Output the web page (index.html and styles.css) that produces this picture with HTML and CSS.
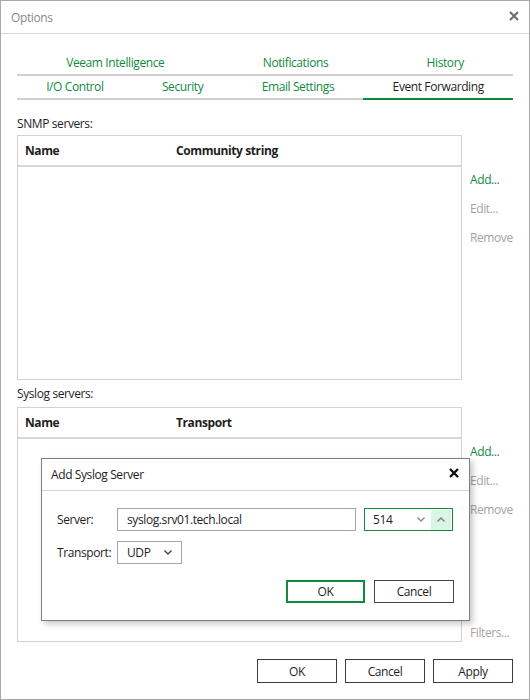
FILE: index.html
```html
<!DOCTYPE html>
<html>
<head>
    <title>Options</title>
    <link rel="stylesheet" href="styles.css">
</head>
<body>
    <div class="window">
        <div class="titlebar">
            <span class="title">Options</span>
            <svg class="close" width="10" height="10" viewBox="0 0 10 10">
                <path d="M1 1 L9 9 M9 1 L1 9" stroke="#707070" stroke-width="2.2" />
            </svg>
        </div>

        <div class="content">
            <div class="tabs">
                <div class="tab-row">
                    <span class="tab">Veeam Intelligence</span>
                    <span class="tab">Notifications</span>
                    <span class="tab">History</span>
                </div>
                <div class="tab-row">
                    <span class="tab">I/O Control</span>
                    <span class="tab">Security</span>
                    <span class="tab">Email Settings</span>
                    <span class="tab active">Event Forwarding</span>
                </div>
            </div>

            <!-- SNMP -->
            <div class="caption caption-snmp">SNMP servers:</div>
            <div class="section section-snmp">
                <div class="list">
                    <div class="list-head">
                        <span class="col-name">Name</span>
                        <span>Community string</span>
                    </div>
                </div>
                <div class="side">
                    <span class="link">Add...</span>
                    <span class="link disabled">Edit...</span>
                    <span class="link disabled">Remove</span>
                </div>
            </div>

            <!-- Syslog -->
            <div class="caption caption-syslog">Syslog servers:</div>
            <div class="section section-syslog">
                <div class="list">
                    <div class="list-head">
                        <span class="col-name">Name</span>
                        <span>Transport</span>
                    </div>
                </div>
                <div class="side">
                    <span class="link">Add...</span>
                    <span class="link disabled">Edit...</span>
                    <span class="link disabled">Remove</span>
                    <span class="link disabled filters">Filters...</span>
                </div>
            </div>

            <div class="footer">
                <button class="btn">OK</button>
                <button class="btn">Cancel</button>
                <button class="btn">Apply</button>
            </div>
        </div>

        <div class="dialog">
            <div class="dialog-title">
                <span>Add Syslog Server</span>
                <svg class="close" width="10" height="10" viewBox="0 0 10 10">
                    <path d="M1 1 L9 9 M9 1 L1 9" stroke="#111" stroke-width="2.4" />
                </svg>
            </div>
            <div class="dialog-body">
                <div class="form-row">
                    <label class="form-label">Server:</label>
                    <div class="field field-server">syslog.srv01.tech.local</div>
                    <div class="spinner">
                        <span class="spinner-value">514</span>
                        <span class="spin-btn">
                            <svg width="8" height="5" viewBox="0 0 8 5"><polyline points="0.5,0.5 4,4 7.5,0.5" fill="none" stroke="#8a8a8a" stroke-width="1.4" /></svg>
                        </span>
                        <span class="spin-btn spin-up">
                            <svg width="8" height="5" viewBox="0 0 8 5"><polyline points="0.5,4.5 4,1 7.5,4.5" fill="none" stroke="#7a7a7a" stroke-width="1.4" /></svg>
                        </span>
                    </div>
                </div>
                <div class="form-row">
                    <label class="form-label">Transport:</label>
                    <div class="field field-select">
                        <span>UDP</span>
                        <svg width="8" height="5" viewBox="0 0 8 5"><polyline points="0.5,0.5 4,4 7.5,0.5" fill="none" stroke="#444" stroke-width="1.4" /></svg>
                    </div>
                </div>
                <div class="dialog-buttons">
                    <button class="btn btn-default">OK</button>
                    <button class="btn btn-dlg">Cancel</button>
                </div>
            </div>
        </div>
    </div>
</body>
</html>
```

FILE: styles.css
```css
* {
    margin: 0;
    padding: 0;
    box-sizing: border-box;
}

body {
    font-family: "Open Sans", "Segoe UI", sans-serif;
    font-size: 12px;
    letter-spacing: -0.4px;
    color: #1e1e1e;
    background-color: #fff;
}

.window {
    position: relative;
    display: flex;
    flex-direction: column;
    width: 530px;
    height: 700px;
    border: 1px solid #a9a9a9;
    background-color: #fff;
}

.titlebar {
    display: flex;
    align-items: center;
    justify-content: space-between;
    height: 33px;
    padding: 0 10px;
    border-bottom: 1px solid #d4d4d4;
}

.title {
    color: #8a8a8a;
}

.titlebar .close {
    margin-top: -3px;
}

.content {
    display: flex;
    flex-direction: column;
    flex: 1;
    padding: 18px 16px 16px 16px;
}

/* tab strip, two rows */
.tab-row {
    display: flex;
}

.tab {
    flex: 1 1 auto;
    line-height: 22px;
    text-align: center;
    color: #108a3c;
    border-bottom: 2px solid #cfcfcf;
}

.tab.active {
    color: #1e1e1e;
    border-bottom-color: #0e8a3c;
}

.caption {
    line-height: 18px;
}

.caption-snmp {
    margin: 15px 0 2px;
}

.caption-syslog {
    margin: 5px 0 4px;
}

.section {
    display: flex;
}

.section-snmp {
    height: 245px;
}

.section-syslog {
    height: 235px;
}

.list {
    flex-shrink: 0;
    width: 445px;
    border: 1px solid #d2d2d2;
}

.list-head {
    display: flex;
    align-items: center;
    height: 31px;
    padding-left: 7px;
    font-weight: bold;
    border-bottom: 2px solid #d6d6d6;
}

.col-name {
    width: 151px;
}

.side {
    display: flex;
    flex-direction: column;
    padding-left: 8px;
    padding-top: 30px;
}

.link {
    line-height: 29px;
    color: #108a3c;
}

.link.disabled {
    color: #a3a3a3;
}

.link.filters {
    margin-top: auto;
    line-height: 18px;
}

.footer {
    display: flex;
    justify-content: flex-end;
    gap: 8px;
    margin-top: 17px;
}

.btn {
    width: 80px;
    height: 24px;
    font-family: inherit;
    font-size: 12px;
    letter-spacing: inherit;
    color: #1e1e1e;
    background-color: #fff;
    border: 1px solid #3c3c3c;
}

/* modal dialog */
.dialog {
    position: absolute;
    left: 40px;
    top: 457px;
    width: 429px;
    height: 163px;
    background-color: #fff;
    border: 1px solid #7d7d7d;
    box-shadow: 3px 3px 6px rgba(0, 0, 0, 0.22);
}

.dialog-title {
    display: flex;
    align-items: center;
    justify-content: space-between;
    height: 32px;
    padding: 0 10px 0 9px;
    border-bottom: 1px solid #d4d4d4;
}

.dialog-title .close {
    margin-top: -3px;
}

.dialog-body {
    padding: 17px 15px 0 15px;
}

.form-row {
    display: flex;
    align-items: center;
    height: 23px;
    margin-bottom: 10px;
}

.form-label {
    width: 60px;
}

.field {
    height: 23px;
    padding-left: 9px;
    line-height: 21px;
    border: 1px solid #a5a5a5;
}

.field-server {
    width: 239px;
}

.field-select {
    display: flex;
    align-items: center;
    justify-content: space-between;
    width: 65px;
    padding-right: 9px;
}

.spinner {
    display: flex;
    align-items: center;
    width: 89px;
    height: 23px;
    margin-left: 8px;
    border: 1px solid #108a3c;
}

.spinner-value {
    flex: 1;
    padding-left: 8px;
}

.spin-btn {
    display: flex;
    align-items: center;
    justify-content: center;
    width: 20px;
    height: 20px;
}

.spin-up {
    margin-right: 1px;
    background-color: #d8f6e3;
}

.dialog-buttons {
    display: flex;
    justify-content: flex-end;
    gap: 9px;
    margin-top: 16px;
}

.btn-default {
    width: 79px;
    height: 23px;
    border: 2px solid #108a3c;
}

.btn-dlg {
    height: 23px;
    border-color: #444;
}
```
